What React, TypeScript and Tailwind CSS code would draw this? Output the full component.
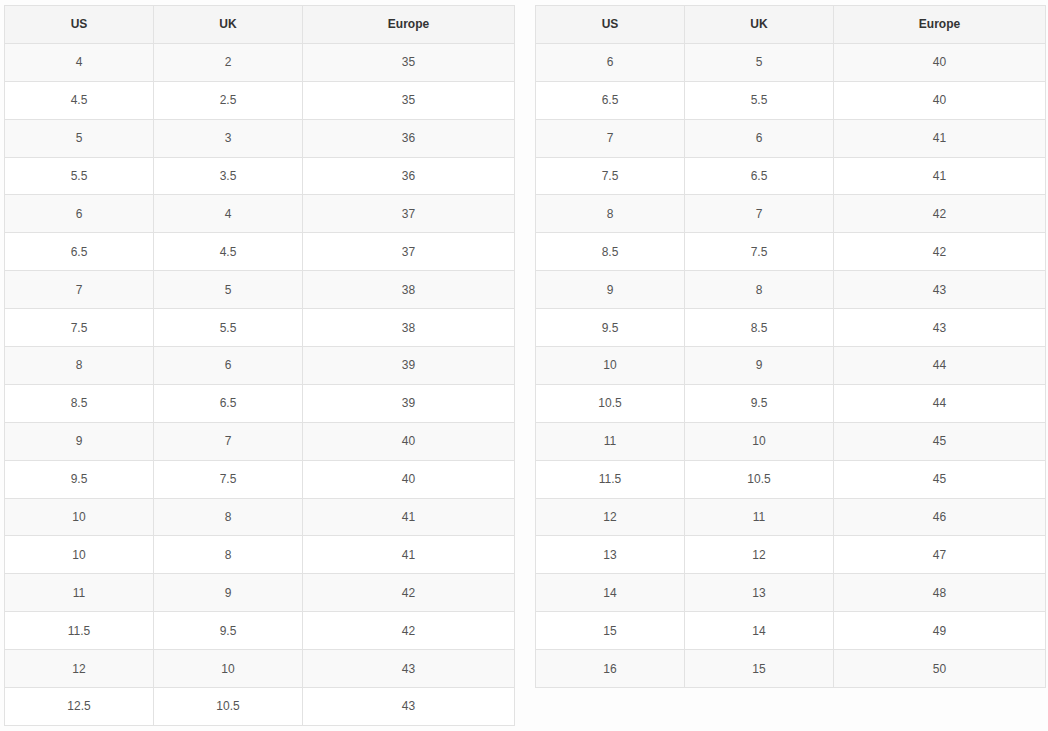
import React from 'react';

type Row = [string, string, string];

const leftRows: Row[] = [
  ['4', '2', '35'],
  ['4.5', '2.5', '35'],
  ['5', '3', '36'],
  ['5.5', '3.5', '36'],
  ['6', '4', '37'],
  ['6.5', '4.5', '37'],
  ['7', '5', '38'],
  ['7.5', '5.5', '38'],
  ['8', '6', '39'],
  ['8.5', '6.5', '39'],
  ['9', '7', '40'],
  ['9.5', '7.5', '40'],
  ['10', '8', '41'],
  ['10', '8', '41'],
  ['11', '9', '42'],
  ['11.5', '9.5', '42'],
  ['12', '10', '43'],
  ['12.5', '10.5', '43'],
];

const rightRows: Row[] = [
  ['6', '5', '40'],
  ['6.5', '5.5', '40'],
  ['7', '6', '41'],
  ['7.5', '6.5', '41'],
  ['8', '7', '42'],
  ['8.5', '7.5', '42'],
  ['9', '8', '43'],
  ['9.5', '8.5', '43'],
  ['10', '9', '44'],
  ['10.5', '9.5', '44'],
  ['11', '10', '45'],
  ['11.5', '10.5', '45'],
  ['12', '11', '46'],
  ['13', '12', '47'],
  ['14', '13', '48'],
  ['15', '14', '49'],
  ['16', '15', '50'],
];

// Tabla de tallas - cabecera gris, filas impares con fondo suave
function SizeTable({ rows }: { rows: Row[] }) {
  return (
    <table className="w-[510px] table-fixed border-collapse text-[12px] text-[#555]">
      <colgroup>
        <col className="w-[149px]" />
        <col className="w-[149px]" />
        <col className="w-[212px]" />
      </colgroup>
      <thead>
        <tr className="h-[37.9px] bg-[#f5f5f5]">
          {['US', 'UK', 'Europe'].map((h) => (
            <th key={h} className="border border-[#e2e2e2] p-0 text-center font-bold text-[#333]">
              {h}
            </th>
          ))}
        </tr>
      </thead>
      <tbody>
        {rows.map((r, i) => (
          <tr key={i} className={`h-[37.9px] ${i % 2 === 0 ? 'bg-[#f9f9f9]' : 'bg-white'}`}>
            {r.map((c, j) => (
              <td key={j} className="border border-[#e2e2e2] p-0 text-center">
                {c}
              </td>
            ))}
          </tr>
        ))}
      </tbody>
    </table>
  );
}

export default function App() {
  return (
    <div
      className="min-h-[731px] bg-[#fdfdfd] pl-[4px] pt-[5px]"
      style={{ fontFamily: '"Liberation Sans", Arial, sans-serif' }}
    >
      <div className="flex items-start gap-[20px]">
        <SizeTable rows={leftRows} />
        <SizeTable rows={rightRows} />
      </div>
    </div>
  );
}
